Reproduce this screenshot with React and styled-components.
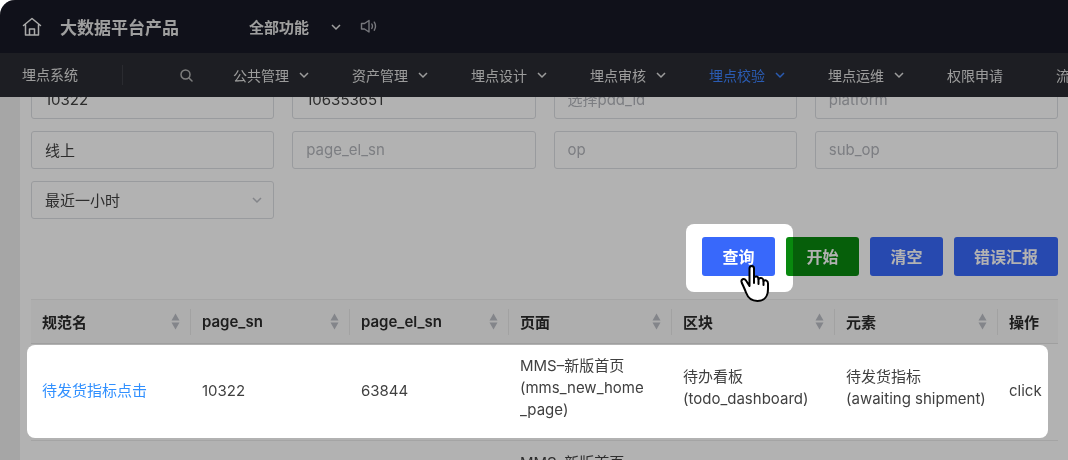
import React from 'react';
import styled, { createGlobalStyle } from 'styled-components';

const GlobalStyle = createGlobalStyle`
    * {
        box-sizing: border-box;
    }

    body {
        margin: 0;
        background: #ffffff;
        font-family: Inter, 'Noto Sans CJK SC', sans-serif;
        font-size: 15px;
        color: #404040;
    }

    button,
    input,
    select {
        font-family: inherit;
    }
`;

const Shell = styled.div`
    position: relative;
    isolation: isolate;
    display: flex;
    flex-direction: column;
    height: 100vh;
    overflow: hidden;
    border-radius: 15px 0 0 0;
    background: #eeeeee;
`;

const TopBar = styled.header`
    display: flex;
    flex: none;
    align-items: center;
    height: 53px;
    padding: 0 22px;
    background: #171824;
    color: #f4f4f4;
`;

const HomeLink = styled.a`
    display: flex;
    width: 38px;
    color: inherit;
`;

const ProductName = styled.h1`
    width: 189px;
    margin: 0;
    font-weight: 600;
    font-size: 17px;
    color: #e4e4e4;
`;

const PlainButton = styled.button`
    display: flex;
    align-items: center;
    padding: 0;
    border: none;
    background: none;
    color: inherit;
`;

const AllFeatures = styled(PlainButton)`
    gap: 22px;
    margin-right: 19px;
    font-weight: 600;
    font-size: 15px;
    color: #e4e4e4;
`;

const NavBar = styled.nav`
    display: flex;
    flex: none;
    align-items: center;
    height: 44px;
    padding-left: 22px;
    background: #292b31;
    color: #e0e0e0;
    font-size: 14px;
    white-space: nowrap;
`;

const SystemName = styled.div`
    flex: none;
    width: 101px;
    border-right: 1px solid #3b3d44;
    line-height: 20px;
`;

const SearchButton = styled(PlainButton)`
    flex: none;
    width: 53px;
    margin-left: 57px;
`;

const NavList = styled.ul`
    display: flex;
    gap: 43px;
    margin: 0;
    padding: 0;
    list-style: none;
`;

const NavItem = styled.li`
    flex: none;
    min-width: 66px;
`;

const NavLink = styled.a`
    display: flex;
    align-items: center;
    gap: 10px;
    color: ${({ $active }) => ($active ? '#3c82ff' : 'inherit')};
    text-decoration: none;
`;

const Content = styled.main`
    flex: 1;
    min-height: 0;
    margin-left: 20px;
    padding: 0 10px 0 11px;
    overflow: hidden;
    background: #ffffff;
`;

/* The page is scrolled, so the first row is partly under the nav bar */
const Filters = styled.form`
    display: grid;
    grid-template-columns: repeat(4, 1fr);
    gap: 12px 18px;
    margin-top: -16px;
`;

const Field = styled.input`
    width: 100%;
    height: 38px;
    padding: 0 13px 2px;
    border: 1px solid #dcdee2;
    border-radius: 3px;
    background: #ffffff;
    font-size: 15px;
    color: #404040;

    &::placeholder {
        color: #b2b4ba;
        opacity: 1;
    }
`;

const SelectBox = styled.div`
    position: relative;

    svg {
        position: absolute;
        top: 14px;
        right: 12px;
        color: #bcbec4;
        pointer-events: none;
    }
`;

const Select = styled(Field)`
    padding-bottom: 0;
    appearance: none;
`;

const Actions = styled.div`
    display: flex;
    justify-content: flex-end;
    gap: 11px;
    margin: 18px 0 23px;
`;

const ActionButton = styled.button`
    min-width: 73px;
    height: 39px;
    padding: 0 20px 2px;
    border: none;
    border-radius: 3px;
    background: ${({ $green }) => ($green ? '#08880e' : '#3868fb')};
    font-weight: 600;
    font-size: 16px;
    color: #ffffff;
`;

const Table = styled.table`
    width: 100%;
    border-collapse: separate;
    border-spacing: 0;
    table-layout: fixed;
`;

const HeadCell = styled.th`
    width: ${({ $width }) => $width}px;
    height: 45px;
    padding: 0;
    border-top: 1px solid #eeeeee;
    border-bottom: 1px solid #e4e4e4;
    background: #f9f9f9;
    font-weight: 600;
    color: #2a2a2a;
    white-space: nowrap;
`;

const HeadInner = styled.div`
    display: flex;
    align-items: center;
    justify-content: space-between;
    height: 26px;
    padding: 0 10px 0 11px;
    border-right: ${({ $last }) => ($last ? 'none' : '1px solid #e8e8e8')};
`;

const Cell = styled.td`
    padding: ${({ $multi }) => ($multi ? '11px 0 19px 11px' : '14px 0 16px 11px')};
    border-bottom: 1px solid #ebebeb;
    line-height: 22px;
    white-space: nowrap;
`;

const NameLink = styled.a`
    color: #3190ff;
    text-decoration: none;
`;

const Line = styled.div``;

/* Guide layer: multiplies the page to a darker tone, white spots stay lit */
const Dim = styled.div`
    position: absolute;
    inset: 0;
    background: #b2b2b2;
    mix-blend-mode: multiply;
    pointer-events: none;
`;

const Spot = styled.div`
    position: absolute;
    border-radius: 8px;
    background: #ffffff;
`;

const ButtonSpot = styled(Spot)`
    top: 224px;
    right: 275px;
    width: 107px;
    height: 68px;
`;

const RowSpot = styled(Spot)`
    top: 345px;
    right: 20px;
    left: 27px;
    height: 93px;
`;

const Pointer = styled.svg`
    position: absolute;
    top: 264px;
    right: 298px;
    pointer-events: none;
`;

const Chevron = ({ size = 10 }) => (
    <svg width={size} height={size} viewBox="0 0 10 10" fill="none" stroke="currentColor" strokeWidth="1.5" aria-hidden="true">
        <path d="M1 3l4 4 4-4" />
    </svg>
);

const HomeIcon = () => (
    <svg width="20" height="20" viewBox="0 0 20 20" fill="none" stroke="currentColor" strokeWidth="1.5" strokeLinejoin="round" strokeLinecap="round" aria-hidden="true">
        <path d="M1.5 8.5L10 1.500 18.500 8.500M3.500 7.500v10.500h13v-10.500M7.500 18v-6h5v6" />
    </svg>
);

const SpeakerIcon = () => (
    <svg width="17" height="16" viewBox="0 0 17 16" fill="none" stroke="#a9aab2" strokeWidth="1.4" strokeLinejoin="round" strokeLinecap="round" aria-hidden="true">
        <path d="M1.500 4.500h3L9 1.500v11.500L4.500 10H1.500zM11.800 5q1.300 2.200 0 4.400M14.300 3.200q2.400 4 0 8" />
    </svg>
);

const SearchIcon = () => (
    <svg width="13" height="13" viewBox="0 0 13 13" fill="none" stroke="#b4b4b4" strokeWidth="1.5" strokeLinecap="round" aria-hidden="true">
        <circle cx="5.500" cy="5.500" r="4.500" />
        <path d="M9 9l3 3" />
    </svg>
);

const SortIcon = () => (
    <svg width="9" height="17" viewBox="0 0 9 17" fill="#bcbec6" aria-hidden="true">
        <path d="M4.500 0.500L8.500 7.500h-8zM4.500 16.500L0.500 9.500h8z" />
    </svg>
);

const NAV = [
    { label: '公共管理', menu: true },
    { label: '资产管理', menu: true },
    { label: '埋点设计', menu: true },
    { label: '埋点审核', menu: true },
    { label: '埋点校验', menu: true, active: true },
    { label: '埋点运维', menu: true },
    { label: '权限申请' },
    { label: '流' },
];

const FIELDS = [
    { label: 'page_sn', value: '10322' },
    { label: 'uid', value: '106353651' },
    { label: '选择pdd_id' },
    { label: 'platform' },
    { label: '环境', value: '线上' },
    { label: 'page_el_sn' },
    { label: 'op' },
    { label: 'sub_op' },
];

const COLUMNS = [
    { label: '规范名', width: 160 },
    { label: 'page_sn', width: 159 },
    { label: 'page_el_sn', width: 159 },
    { label: '页面', width: 163 },
    { label: '区块', width: 163 },
    { label: '元素', width: 163 },
    { label: '操作', width: 60 },
];

const ROWS = [1, 2].map((id) => ({
    id,
    name: '待发货指标点击',
    cells: [
        ['10322'],
        ['63844'],
        ['MMS–新版首页', '(mms_new_home', '_page)'],
        ['待办看板', '(todo_dashboard)'],
        ['待发货指标', '(awaiting shipment)'],
        ['click'],
    ],
}));

const App = () => {
    return (
        <Shell>
            <GlobalStyle />
            <TopBar>
                <HomeLink href="#" aria-label="首页">
                    <HomeIcon />
                </HomeLink>
                <ProductName>大数据平台产品</ProductName>
                <AllFeatures type="button">
                    全部功能
                    <Chevron />
                </AllFeatures>
                <PlainButton type="button" aria-label="公告">
                    <SpeakerIcon />
                </PlainButton>
            </TopBar>
            <NavBar>
                <SystemName>埋点系统</SystemName>
                <SearchButton type="button" aria-label="搜索">
                    <SearchIcon />
                </SearchButton>
                <NavList>
                    {NAV.map((item) => (
                        <NavItem key={item.label}>
                            <NavLink href="#" $active={item.active}>
                                {item.label}
                                {item.menu && <Chevron />}
                            </NavLink>
                        </NavItem>
                    ))}
                </NavList>
            </NavBar>
            <Content>
                <Filters>
                    {FIELDS.map((field) => (
                        <Field
                            key={field.label}
                            aria-label={field.label}
                            placeholder={field.label}
                            defaultValue={field.value}
                        />
                    ))}
                    <SelectBox>
                        <Select as="select" aria-label="时间范围">
                            <option>最近一小时</option>
                        </Select>
                        <Chevron />
                    </SelectBox>
                </Filters>
                <Actions>
                    <ActionButton type="button">查询</ActionButton>
                    <ActionButton type="button" $green>
                        开始
                    </ActionButton>
                    <ActionButton type="button">清空</ActionButton>
                    <ActionButton type="button">错误汇报</ActionButton>
                </Actions>
                <Table>
                    <thead>
                        <tr>
                            {COLUMNS.map((column, index) => {
                                const last = index === COLUMNS.length - 1;
                                return (
                                    <HeadCell key={column.label} $width={column.width} scope="col">
                                        <HeadInner $last={last}>
                                            {column.label}
                                            {!last && (
                                                <PlainButton type="button" aria-label={`${column.label} 排序`}>
                                                    <SortIcon />
                                                </PlainButton>
                                            )}
                                        </HeadInner>
                                    </HeadCell>
                                );
                            })}
                        </tr>
                    </thead>
                    <tbody>
                        {ROWS.map((row) => (
                            <tr key={row.id}>
                                <Cell>
                                    <NameLink href="#">{row.name}</NameLink>
                                </Cell>
                                {row.cells.map((lines, index) => (
                                    <Cell key={COLUMNS[index + 1].label} $multi={lines.length > 1}>
                                        {lines.map((line) => (
                                            <Line key={line}>{line}</Line>
                                        ))}
                                    </Cell>
                                ))}
                            </tr>
                        ))}
                    </tbody>
                </Table>
            </Content>
            <Dim>
                <ButtonSpot />
                <RowSpot />
            </Dim>
            <Pointer width="30" height="38" viewBox="0 0 30 38" fill="#ffffff" stroke="#000000" strokeWidth="2" strokeLinejoin="round" strokeLinecap="round" aria-hidden="true">
                <path d="M9.500 22V4.500C9.500 1 14 1 14 4.500V13.500C15.500 11.500 18.500 12.500 18.500 15C20.500 13 23.500 14 23.500 17C25.500 15.500 28 16.500 28 19.500V25C28 32 24.500 37 17.500 37C11 37 8 34 6 28.500C4.500 24.500 3 21.500 1.700 18.500C.5 15.500 4 13.500 6 16.500L9.500 22z" />
                <path d="M14 13.500V19M18.500 15V20M23.500 17V21" fill="none" />
            </Pointer>
        </Shell>
    );
};

export default App;
